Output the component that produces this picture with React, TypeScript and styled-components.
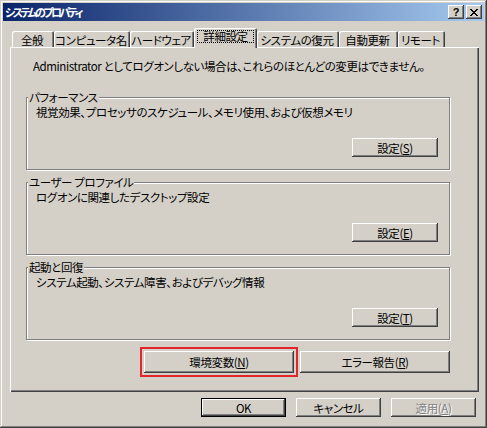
import React from 'react';
import styled, {createGlobalStyle, css} from 'styled-components';

const GlobalStyle = createGlobalStyle`
  html, body {
    margin: 0;
    padding: 0;
    background: #d4d0c8;
  }
  body {
    font-family: "Noto Sans CJK JP", "Noto Sans", sans-serif;
    font-size: 11.5px;
    letter-spacing: -0.4px;
    font-feature-settings: "palt";
    color: #000;
  }
  * {
    box-sizing: border-box;
  }
`;

const raised = css`
  box-shadow:
    inset -1px -1px 0 #404040,
    inset 1px 1px 0 #ffffff,
    inset -2px -2px 0 #808080,
    inset 2px 2px 0 #d4d0c8;
`;

const WindowStyles = styled.div`
  width: 487px;
  height: 428px;
  background: #d4d0c8;
  padding-top: 3px;
  display: flex;
  flex-direction: column;
  box-shadow:
    inset -1px -1px 0 #404040,
    inset 1px 1px 0 #d4d0c8,
    inset -2px -2px 0 #808080,
    inset 2px 2px 0 #ffffff;
`;

const TitleBar = styled.div`
  margin: 0 3px;
  height: 18px;
  padding: 0 2px;
  display: flex;
  align-items: center;
  background: linear-gradient(to right, #0a246a, #a6caf0);
  color: #fff;
`;

const TitleText = styled.span`
  flex: 1;
  font-size: 11px;
  font-weight: bold;
  letter-spacing: -2.6px;
  line-height: 14px;
  white-space: nowrap;
`;

const CaptionButton = styled.div<{$gap?: boolean}>`
  width: 16px;
  height: 14px;
  margin-left: ${(p) => (p.$gap ? '2px' : '0')};
  background: #d4d0c8;
  color: #000;
  display: flex;
  align-items: center;
  justify-content: center;
  font-family: "Liberation Sans", sans-serif;
  font-size: 11px;
  font-weight: bold;
  letter-spacing: 0;
  line-height: 1;
  ${raised}
`;

const Body = styled.div`
  padding: 7px 8px 0 10px;
`;

const TabStrip = styled.div`
  display: flex;
  align-items: flex-end;
  height: 19px;
  padding-left: 2px;
`;

const Tab = styled.div<{$w: number; $active?: boolean}>`
  width: ${(p) => p.$w}px;
  height: ${(p) => (p.$active ? 20 : 16)}px;
  margin-bottom: ${(p) => (p.$active ? -1 : 0)}px;
  position: relative;
  z-index: ${(p) => (p.$active ? 1 : 0)};
  background: #d4d0c8;
  display: flex;
  justify-content: center;
  align-items: ${(p) => (p.$active ? 'flex-start' : 'center')};
  padding: ${(p) => (p.$active ? '2px 3px 0' : '1px 2px 0 0')};
  line-height: 14px;
  white-space: nowrap;
  overflow: hidden;
  border-radius: 2px 2px 0 0;
  box-shadow:
    inset 1px 1px 0 #ffffff,
    inset -1px 0 0 #404040,
    inset -2px 0 0 #808080;
`;

const FocusLabel = styled.span`
  flex: 1;
  height: 13px;
  border: 1px dotted #000;
  display: flex;
  align-items: center;
  justify-content: center;
  line-height: 11px;
`;

const Panel = styled.div`
  height: 345px;
  padding: 12px 0 0 16px;
  display: flex;
  flex-direction: column;
  box-shadow:
    inset 1px 1px 0 #ffffff,
    inset -1px -1px 0 #404040,
    inset -2px -2px 0 #808080;
`;

const Intro = styled.div`
  margin-left: 7px;
  line-height: 14px;
  white-space: nowrap;
`;

const Groups = styled.div`
  margin-top: 24px;
  width: 424px;
  display: flex;
  flex-direction: column;
  gap: 12px;
`;

const Group = styled.div`
  height: 73px;
  border: 1px solid #808080;
  box-shadow: 1px 1px 0 #ffffff, inset 1px 1px 0 #ffffff;
  display: flex;
  flex-direction: column;
  padding: 0 11px 12px 9px;
`;

const Legend = styled.div`
  align-self: flex-start;
  margin: -7px 0 0 -8px;
  padding: 0 1px;
  background: #d4d0c8;
  line-height: 12px;
  white-space: nowrap;
`;

const Desc = styled.div`
  margin-top: 3px;
  line-height: 12px;
  white-space: nowrap;
`;

const GroupButtons = styled.div`
  margin-top: auto;
  display: flex;
  justify-content: flex-end;
`;

const Button = styled.div<{$w: number; $h: number; $default?: boolean; $disabled?: boolean; $highlight?: boolean}>`
  width: ${(p) => p.$w}px;
  height: ${(p) => p.$h}px;
  background: #d4d0c8;
  display: flex;
  align-items: center;
  justify-content: center;
  line-height: 14px;
  white-space: nowrap;
  ${raised}
  ${(p) => p.$default && css`
    border: 1px solid #000;
  `}
  ${(p) => p.$disabled && css`
    color: #808080;
    text-shadow: 1px 1px 0 #ffffff;
  `}
  ${(p) => p.$highlight && css`
    outline: 2px solid #e3262b;
    outline-offset: 2px;
  `}
`;

const EnvRow = styled.div`
  margin-top: 11px;
  width: 424px;
  display: flex;
  justify-content: flex-end;
  gap: 6px;
`;

const Footer = styled.div`
  margin-top: 6px;
  padding-right: 11px;
  display: flex;
  justify-content: flex-end;
  gap: 10px;
`;

const tabs = [
  {name: '全般', w: 42},
  {name: 'コンピュータ名', w: 76},
  {name: 'ハードウェア', w: 64},
  {name: '詳細設定', w: 63, active: true},
  {name: 'システムの復元', w: 82},
  {name: '自動更新', w: 59},
  {name: 'リモート', w: 47},
];

const groups = [
  {title: 'パフォーマンス', desc: '視覚効果、プロセッサのスケジュール、メモリ使用、および仮想メモリ', key: 'S'},
  {title: 'ユーザー プロファイル', desc: 'ログオンに関連したデスクトップ設定', key: 'E'},
  {title: '起動と回復', desc: 'システム起動、システム障害、およびデバッグ情報', key: 'T'},
];

const CloseIcon = () => (
  <svg width="8" height="7" viewBox="0 0 8 7" shapeRendering="crispEdges">
    <path d="M0 0h2v1h-2zM6 0h2v1h-2zM1 1h2v1h-2zM5 1h2v1h-2zM2 2h4v1h-4zM3 3h2v1h-2zM2 4h4v1h-4zM1 5h2v1h-2zM5 5h2v1h-2zM0 6h2v1h-2zM6 6h2v1h-2z" fill="#000" />
  </svg>
);

export default function App() {
  return (
    <>
      <GlobalStyle />
      <WindowStyles>
        <TitleBar>
          <TitleText>システムのプロパティ</TitleText>
          <CaptionButton>?</CaptionButton>
          <CaptionButton $gap>
            <CloseIcon />
          </CaptionButton>
        </TitleBar>
        <Body>
          <TabStrip>
            {tabs.map((tab) => (
              <Tab key={tab.name} $w={tab.w} $active={tab.active}>
                {tab.active ? <FocusLabel>{tab.name}</FocusLabel> : tab.name}
              </Tab>
            ))}
          </TabStrip>
          <Panel>
            <Intro>Administrator としてログオンしない場合は、これらのほとんどの変更はできません。</Intro>
            <Groups>
              {groups.map((g) => (
                <Group key={g.title}>
                  <Legend>{g.title}</Legend>
                  <Desc>{g.desc}</Desc>
                  <GroupButtons>
                    <Button $w={86} $h={19}>
                      設定(<u>{g.key}</u>)
                    </Button>
                  </GroupButtons>
                </Group>
              ))}
            </Groups>
            <EnvRow>
              <Button $w={150} $h={22} $highlight>
                環境変数(<u>N</u>)
              </Button>
              <Button $w={150} $h={22}>
                エラー報告(<u>R</u>)
              </Button>
            </EnvRow>
          </Panel>
        </Body>
        <Footer>
          <Button $w={85} $h={19} $default>OK</Button>
          <Button $w={85} $h={19}>キャンセル</Button>
          <Button $w={85} $h={19} $disabled>
            適用(<u>A</u>)
          </Button>
        </Footer>
      </WindowStyles>
    </>
  );
}
